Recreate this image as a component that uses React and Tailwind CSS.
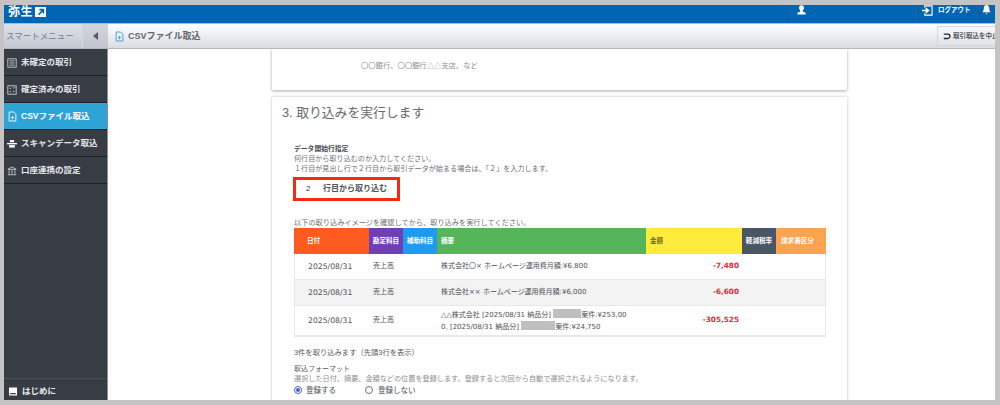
import React from "react";

const FF = "font-['Liberation_Sans','Noto_Sans_CJK_JP',sans-serif]";

function FileIcon({ className = "" }) {
  return (
    <svg viewBox="0 0 12 14" className={className} fill="none" stroke="currentColor" strokeWidth="1.2">
      <path d="M1.5 1h6l3 3v9h-9z" />
      <path d="M4 8.500h4M6 6.500v4" />
    </svg>
  );
}

function ListIcon() {
  return (
    <svg viewBox="0 0 12 12" className="w-[10px] h-[10px] text-[#d5d7da]" fill="none" stroke="currentColor" strokeWidth="1">
      <rect x="1" y="1" width="10" height="10" />
      <path d="M3 3.500h6M3 6h6M3 8.500h6" />
    </svg>
  );
}

function CheckListIcon() {
  return (
    <svg viewBox="0 0 12 12" className="w-[10px] h-[10px] text-[#d5d7da]" fill="none" stroke="currentColor" strokeWidth="1">
      <rect x="1" y="1" width="10" height="10" />
      <path d="M3 4h2M7 3l1 1 1.500-1.500M3 8h2M7 7.500h2" />
    </svg>
  );
}

function ScanIcon() {
  return (
    <svg viewBox="0 0 14 12" className="w-[12px] h-[10px] text-white" fill="currentColor">
      <rect x="4" y="0.500" width="6" height="3" />
      <rect x="0" y="4.500" width="14" height="2" />
      <rect x="3" y="7.500" width="8" height="3.500" />
    </svg>
  );
}

function BankIcon() {
  return (
    <svg viewBox="0 0 12 12" className="w-[10px] h-[10px] text-[#d5d7da]" fill="none" stroke="currentColor" strokeWidth="1">
      <path d="M1 4l5-3 5 3zM2.500 5v4.500M6 5v4.500M9.500 5v4.500M1 10.500h10" />
    </svg>
  );
}

function MenuItem({ icon, label, active }) {
  return (
    <div
      className={`h-[27px] flex items-center gap-[4px] pl-[3px] pt-[1px] border-b border-[#1f2227] text-[8.500px] font-bold whitespace-nowrap ${
        active ? "bg-[#2ea3d5] text-white" : "bg-[#383c44] text-[#e4e6e9]"
      }`}
    >
      <span className="w-[10px] flex justify-center">{icon}</span>
      <span className="leading-none">{label}</span>
    </div>
  );
}

const cols = "grid-cols-[75px_34px_34px_209px_96px_34px_50px]";

function Row({ date, desc, amount, gray, tall }) {
  return (
    <div
      className={`grid ${cols} items-center border-b border-[#e8e8e8] text-[#4b5057] ${
        gray ? "bg-[#f3f3f3] h-[26px]" : tall ? "bg-white h-[30px]" : "bg-white h-[26px]"
      }`}
    >
      <span className="pl-[13px] text-[7.700px] font-['DejaVu_Sans',sans-serif]">{date}</span>
      <span className="pl-[3px] text-[7px] whitespace-nowrap">売上高</span>
      <span />
      <span className="pl-[3px] whitespace-nowrap leading-[11px] text-[7px] font-['DejaVu_Sans','Noto_Sans_CJK_JP',sans-serif]">{desc}</span>
      <span className="pr-[4px] text-right text-[#e8283c] text-[7.300px] font-bold font-['DejaVu_Sans',sans-serif]">{amount}</span>
      <span />
      <span />
    </div>
  );
}

function Mask({ w }) {
  return <span className={`inline-block h-[9px] align-[-1px] bg-[#bfbfbf] ${w}`} />;
}

function HeadCell({ className, children }) {
  return (
    <div className={`flex items-center font-bold leading-none whitespace-nowrap ${className}`}>{children}</div>
  );
}

export default function App() {
  return (
    <div className={`w-[1000px] h-[405px] bg-[#c4c4c4] pt-[5px] pl-[4px] pr-[5px] pb-[5px] overflow-hidden ${FF}`}>
      <div className="w-[991px] h-[395px] flex flex-col bg-white overflow-hidden">
        {/* top bar */}
        <header className="h-[19px] shrink-0 bg-[#0066b3] border-b border-[#7ccbee] flex items-center text-white">
          <div className="pl-[4px] flex items-center gap-[2px] w-[786px] -mt-[4px]">
            <span className="text-[12px] font-bold tracking-[0.500px] leading-none">弥生</span>
            <span className="w-[11px] h-[10px] bg-white flex items-center justify-center">
              <svg viewBox="0 0 10 10" className="w-[8px] h-[8px] text-[#0066b3]" fill="none" stroke="currentColor" strokeWidth="2">
                <path d="M2 8.500L8 2M3 2h5v5" />
              </svg>
            </span>
          </div>
          <div className="h-full w-[126px] border-l border-[#2b5f8f] pl-[6px] flex items-start">
            <svg viewBox="0 0 10 10" className="w-[9px] h-[10px]" fill="currentColor">
              <circle cx="5" cy="2.500" r="2.800" />
              <path d="M3.500 5h3v2l3 1v2H.5V8l3-1z" />
            </svg>
          </div>
          <div className="h-full w-[60px] border-l border-[#2b5f8f] pl-[5px] flex items-start gap-[5px]">
            <svg viewBox="0 0 12 12" className="w-[11px] h-[11px]" fill="none" stroke="currentColor" strokeWidth="1.200">
              <path d="M3 3V1h8v10H3V9" />
              <path d="M0 6h6M4 3.500L7 6 4 8.500" strokeWidth="1.800" />
            </svg>
            <span className="text-[6.500px] font-bold leading-[10px] whitespace-nowrap">ログアウト</span>
          </div>
          <div className="h-full flex-1 border-l border-[#2b5f8f] pl-[5px] flex items-start">
            <svg viewBox="0 0 10 11" className="w-[9px] h-[10px]" fill="currentColor">
              <path d="M5 0c2 0 3 1.500 3 3.500 0 2 .5 3 1.500 4.500H.5C1.500 6.500 2 5.500 2 3.500 2 1.500 3 0 5 0zM3.800 9h2.400L5 10.500z" />
            </svg>
          </div>
        </header>

        {/* subheader */}
        <div className="h-[25px] shrink-0 flex border-b border-[#b4b7c0]">
          <div className="w-[79px] bg-gradient-to-b from-[#dfe2e8] to-[#c3c8d2] text-[#777b86] text-[8.500px] flex items-center pl-[2px] leading-none whitespace-nowrap border-r border-[#d4d7de]">
            スマートメニュー
          </div>
          <div className="w-[25px] bg-gradient-to-b from-[#d3d6de] to-[#c0c5cf] flex items-center justify-center">
            <span className="w-0 h-0 border-y-[4px] border-y-transparent border-r-[5px] border-r-[#555a66]" />
          </div>
          <div className="flex-1 bg-gradient-to-b from-white to-[#dadce3] flex items-center justify-between">
            <div className="flex items-center gap-[4px] pl-[7px]">
              <FileIcon className="w-[9px] h-[11px] text-[#3d97cf]" />
              <span className="text-[9px] font-bold text-[#62676f] leading-none">CSVファイル取込</span>
            </div>
            <div className="w-[58px] h-[20px] bg-gradient-to-b from-[#f7f8fa] to-[#e1e3e9] border border-[#d3d5dc] border-r-0 rounded-l-[2px] flex items-center pl-[5px] gap-[2px] overflow-hidden whitespace-nowrap">
              <svg viewBox="0 0 10 8" className="w-[8px] h-[7px] shrink-0 text-[#23272e]" fill="none" stroke="currentColor" strokeWidth="1.600">
                <path d="M1 1h5a2.500 2.500 0 010 5.500H1" />
              </svg>
              <span className="text-[6.500px] font-bold text-[#555a63] leading-none">取引取込を中止</span>
            </div>
          </div>
        </div>

        {/* body */}
        <div className="flex-1 min-h-0 flex">
          {/* sidebar */}
          <aside className="w-[104px] shrink-0 bg-[#383c44] border-r border-[#8b8e95] flex flex-col justify-between">
            <nav>
              <MenuItem icon={<ListIcon />} label="未確定の取引" />
              <MenuItem icon={<CheckListIcon />} label="確定済みの取引" />
              <MenuItem icon={<FileIcon className="w-[9px] h-[11px] text-white" />} label="CSVファイル取込" active />
              <MenuItem icon={<ScanIcon />} label="スキャンデータ取込" />
              <MenuItem icon={<BankIcon />} label="口座連携の設定" />
            </nav>
            <div className="h-[22px] border-t border-[#4a4e56] flex items-center gap-[5px] pl-[5px] pt-[3px] text-[8.500px] font-bold text-[#eceef0]">
              <svg viewBox="0 0 10 10" className="w-[8px] h-[9px] text-white" fill="currentColor">
                <path d="M0 0h10v10H0zM1.500 7v1.500h7V7z" fillRule="evenodd" />
              </svg>
              <span className="leading-none">はじめに</span>
            </div>
          </aside>

          {/* main */}
          <main className="flex-1 min-w-0 pl-[164px] overflow-hidden bg-white">
            <div className="w-[575px] h-[41px] bg-white shadow-[0_1px_3px_rgba(0,0,0,0.35)] pl-[89px] pt-[13px]">
              <p className="text-[7.300px] text-[#8a8f96] leading-none whitespace-nowrap">〇〇銀行、〇〇銀行△△支店、など</p>
            </div>
            <section className="w-[575px] mt-[7px] h-[320px] bg-white shadow-[0_0_3px_rgba(0,0,0,0.25)] pl-[10px]">
              <h2 className="text-[12.800px] leading-none pt-[10px] text-[#666b72] whitespace-nowrap">3. 取り込みを実行します</h2>
              <div className="pl-[12px] pt-[24px]">
                <p className="text-[6.800px] font-bold text-[#444a52] leading-[10px]">データ開始行指定</p>
                <p className="text-[7.100px] text-[#6a6f76] leading-[10.500px]">何行目から取り込むのか入力してください。</p>
                <p className="text-[7.100px] text-[#6a6f76] leading-[10.500px] whitespace-nowrap">１行目が見出し行で２行目から取引データが始まる場合は、「２」を入力します。</p>
                <div className="w-[107px] h-[24px] -ml-[1px] mt-[2px] border-[3px] border-[#f52a12] flex items-center pl-[10px] text-[8px] font-bold text-[#505660]">
                  <span className="w-[17px] font-normal text-[#333840]">2</span>
                  <span className="whitespace-nowrap">行目から取り込む</span>
                </div>
                <p className="text-[7.200px] text-[#6a6f76] leading-none mt-[18px] whitespace-nowrap">以下の取り込みイメージを確認してから、取り込みを実行してください。</p>

                <div className="w-[532px] mt-[2px] border-x border-b border-[#e8e8e8]">
                  <div className={`grid ${cols} h-[26px] -mx-[1px] text-[6.600px]`}>
                    <HeadCell className="bg-[#ff5a1f] text-white pl-[13px]">日付</HeadCell>
                    <HeadCell className="bg-[#6f3fb5] text-white justify-center">勘定科目</HeadCell>
                    <HeadCell className="bg-[#1e9bf0] text-white justify-center">補助科目</HeadCell>
                    <HeadCell className="bg-[#55b55a] text-white pl-[4px]">摘要</HeadCell>
                    <HeadCell className="bg-[#ffeb3b] text-[#6f6a2a] pl-[4px]">金額</HeadCell>
                    <HeadCell className="bg-[#4a5565] text-white justify-center">軽減税率</HeadCell>
                    <HeadCell className="bg-[#faa350] text-white pl-[5px]">請求書区分</HeadCell>
                  </div>
                  <Row date="2025/08/31" desc="株式会社〇× ホームページ運用費月額:¥6,800" amount="-7,480" />
                  <Row date="2025/08/31" desc="株式会社×× ホームページ運用費月額:¥6,000" amount="-6,600" gray />
                  <Row
                    date="2025/08/31"
                    tall
                    amount="-305,525"
                    desc={
                      <>
                        △△株式会社 [2025/08/31 納品分] <Mask w="w-[28px]" />案件:¥253,00
                        <br />
                        0, [2025/08/31 納品分] <Mask w="w-[34px]" />案件:¥24,750
                      </>
                    }
                  />
                </div>

                <p className="text-[7.300px] text-[#555a62] leading-none mt-[12px] whitespace-nowrap">3件を取り込みます（先頭3行を表示）</p>
                <p className="text-[7px] text-[#555a62] leading-none mt-[9px]">取込フォーマット</p>
                <p className="text-[7.150px] text-[#8a8f96] leading-none mt-[4px] whitespace-nowrap">選択した日付、摘要、金額などの位置を登録します。登録すると次回から自動で選択されるようになります。</p>
                <div className="flex items-center mt-[3px] text-[7.500px] text-[#444a52] leading-none">
                  <span className="w-[8px] h-[8px] shrink-0 rounded-full border border-[#4a63c0] flex items-center justify-center">
                    <span className="w-[4px] h-[4px] rounded-full bg-[#4a63c0]" />
                  </span>
                  <span className="ml-[4px] w-[59px] whitespace-nowrap">登録する</span>
                  <span className="w-[8px] h-[8px] shrink-0 rounded-full border border-[#6a6f76]" />
                  <span className="ml-[5px] whitespace-nowrap">登録しない</span>
                </div>
              </div>
            </section>
          </main>
        </div>
      </div>
    </div>
  );
}
